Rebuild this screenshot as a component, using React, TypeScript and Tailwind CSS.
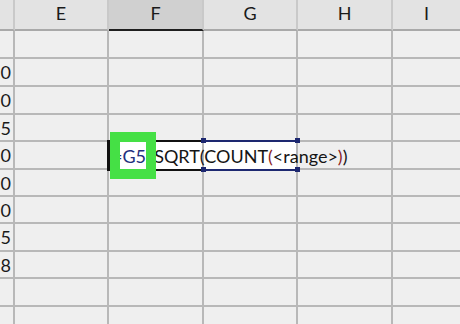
import React from "react";

const rowHeights = [28, 28, 28, 27, 28, 27, 27, 28, 27, 28, 20];
const digits = ["", "0", "0", "5", "0", "0", "0", "5", "8", "", ""];
const cols = ["", "E", "F", "G", "H", "I"];

export default function App() {
  return (
    <div
      className="relative w-[460px] h-[324px] overflow-hidden bg-[#efefef]"
      style={{ fontFamily: "Lato, 'Liberation Sans', sans-serif" }}
    >
      {/* header */}
      <div className="grid grid-cols-[15px_94px_95px_94px_95px_1fr] h-[31px] bg-[#e3e3e3]">
        {cols.map((c, i) => (
          <div
            key={i}
            className={`flex items-center justify-center text-[18px] text-[#1a1a1a] ${
              i < 5 ? "border-r-2 border-[#c9c9c9]" : ""
            } ${
              c === "F"
                ? "bg-[#d0d0d0] border-b-2 border-b-[#1e1e1e]"
                : "border-b-2 border-b-[#a9a9a9]"
            }`}
          >
            <span className="pb-[2px]">{c}</span>
          </div>
        ))}
      </div>

      {/* body rows */}
      {rowHeights.map((h, r) => (
        <div
          key={r}
          className="grid grid-cols-[15px_94px_95px_94px_95px_1fr] border-b-2 border-[#b8b8b8]"
          style={{ height: h }}
        >
          <div className="flex items-center justify-end pr-[2px] border-r-2 border-[#b8b8b8] text-[18px] text-[#1a1a1a]">
            {digits[r]}
          </div>
          <div className="border-r-2 border-[#b8b8b8]" />
          <div
            className={`border-r-2 border-[#b8b8b8] ${
              r === 4 ? "bg-white flex items-center pl-[3px] overflow-visible" : ""
            }`}
          >
            {r === 4 && (
              <span className="relative z-10 whitespace-nowrap text-[18px] text-[#151515] leading-none">
                <span className="text-[#22307e]">=G5</span>/SQRT(COUNT
                <span className="text-[#8c1f1f]">(</span>&lt;range&gt;
                <span className="text-[#8c1f1f]">)</span>)
              </span>
            )}
          </div>
          <div className={`border-r-2 border-[#b8b8b8] ${r === 4 ? "bg-white" : ""}`} />
          <div className="border-r-2 border-[#b8b8b8]" />
          <div />
        </div>
      ))}

      {/* active cell border */}
      <div className="absolute left-[107px] top-[140px] w-[98px] h-[31px] border-2 border-[#111] border-r-0 z-20" />
      <div className="absolute left-[107px] top-[140px] w-[3px] h-[31px] bg-[#111] z-20" />
      {/* range reference box */}
      <div className="absolute left-[203px] top-[140px] w-[95px] h-[31px] border-y-2 border-[#1d2870] z-20" />
      <div className="absolute left-[201px] top-[138px] w-[5px] h-[5px] bg-[#1d2870] z-20" />
      <div className="absolute left-[295px] top-[138px] w-[5px] h-[5px] bg-[#1d2870] z-20" />
      <div className="absolute left-[201px] top-[167px] w-[5px] h-[5px] bg-[#1d2870] z-20" />
      <div className="absolute left-[295px] top-[167px] w-[5px] h-[5px] bg-[#1d2870] z-20" />

      {/* green highlight frame */}
      <div className="absolute left-[110px] top-[132px] w-[46px] h-[47px] border-[10px] border-[#45e045] z-30" />
    </div>
  );
}
